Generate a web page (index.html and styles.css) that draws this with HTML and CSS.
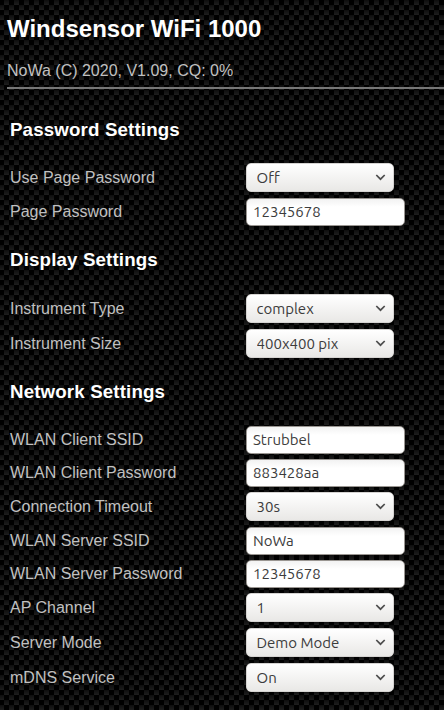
FILE: index.html
```
<!DOCTYPE html>
<html lang="en">
<head>
<meta charset="utf-8">
<title>Windsensor WiFi 1000</title>
<link rel="stylesheet" href="styles.css">
</head>
<body>
<svg class="symbols" width="0" height="0"><symbol id="chevron" viewBox="0 0 10 7"><path d="M.8 1 5 5.2 9.2 1" fill="none" stroke="#4d4d4d" stroke-width="1.7"/></symbol></svg>
<header>
<h1>Windsensor WiFi 1000</h1>
<p>NoWa (C) 2020, V1.09, CQ: 0%</p>
</header>
<form>
<section>
<h2>Password Settings</h2>
<div class="row select-row"><label for="usepw">Use Page Password</label><div class="select"><select id="usepw"><option>Off</option></select><svg><use href="#chevron"/></svg></div></div>
<div class="row"><label for="pw">Page Password</label><input id="pw" value="12345678"></div>
</section>
<section class="display">
<h2>Display Settings</h2>
<div class="row select-row"><label for="type">Instrument Type</label><div class="select"><select id="type"><option>complex</option></select><svg><use href="#chevron"/></svg></div></div>
<div class="row select-row"><label for="size">Instrument Size</label><div class="select"><select id="size"><option>400x400 pix</option></select><svg><use href="#chevron"/></svg></div></div>
</section>
<section class="network">
<h2>Network Settings</h2>
<div class="row"><label for="cssid">WLAN Client SSID</label><input id="cssid" value="Strubbel"></div>
<div class="row"><label for="cpw">WLAN Client Password</label><input id="cpw" value="883428aa"></div>
<div class="row select-row"><label for="timeout">Connection Timeout</label><div class="select"><select id="timeout"><option>30s</option></select><svg><use href="#chevron"/></svg></div></div>
<div class="row"><label for="sssid">WLAN Server SSID</label><input id="sssid" value="NoWa"></div>
<div class="row"><label for="spw">WLAN Server Password</label><input id="spw" value="12345678"></div>
<div class="row select-row"><label for="channel">AP Channel</label><div class="select"><select id="channel"><option>1</option></select><svg><use href="#chevron"/></svg></div></div>
<div class="row select-row"><label for="mode">Server Mode</label><div class="select"><select id="mode"><option>Demo Mode</option></select><svg><use href="#chevron"/></svg></div></div>
<div class="row select-row"><label for="mdns">mDNS Service</label><div class="select"><select id="mdns"><option>On</option></select><svg><use href="#chevron"/></svg></div></div>
</section>
</form>
</body>
</html>
```
FILE: styles.css
```
* { box-sizing: border-box; }
html { height: 100%; overflow: hidden; background: #000; }
body {
  margin: 0;
  height: 710px;
  overflow: hidden;
  font: 16px/20px "Liberation Sans", Arial, sans-serif;
  color: #c0c0c0;
  background-color: #000;
  background-image:
    conic-gradient(transparent 25%, #000 0 50%, transparent 0 75%, #000 0),
    linear-gradient(#0e0e0e, #1e1e1e);
  background-size: 10px 10px, 10px 5px;
  background-position: 9px 0, 0 0;
}
.symbols { position: absolute; }
header { margin-left: 7px; height: 89px; padding-top: 15px; border-bottom: 2px solid #777; }
h1, h2 { margin: 0; color: #fff; font-weight: bold; }
h1 { font-size: 24px; line-height: 28px; }
header p { margin: 18px 0 0; }
form { margin-left: 10px; }
section { padding-top: 30px; }
.display { padding-top: 18px; }
.network { padding-top: 17px; }
h2 { font-size: 18.72px; line-height: 22px; letter-spacing: 0.15px; margin-bottom: 22px; }
.display h2 { margin-bottom: 23px; }
.network h2 { margin-bottom: 23px; }
.row { display: grid; grid-template-columns: 236px auto; justify-content: start; align-items: start; height: 33px; }
.select-row { height: 35px; }
label { line-height: 28px; }
.select-row label { line-height: 30px; }
input, select {
  display: block;
  margin: 0;
  appearance: none;
  font: 15px "Ubuntu", "Noto Sans", sans-serif;
  color: #3c3c3c;
  border: 1px solid #b6b2ae;
  border-radius: 5px;
  outline: 0;
}
input { width: 159px; height: 28px; padding: 0 6px 2px; background: linear-gradient(#f2f2f2, #fff 8px); border-color: #9a9692; }
.select { position: relative; }
select { width: 148px; height: 29px; padding: 0 9.5px; background: linear-gradient(#fff, #e9e8e6); border-color: #d5d3d1; }
.select svg { position: absolute; left: 129px; top: 11px; width: 11px; height: 7px; pointer-events: none; }
```
